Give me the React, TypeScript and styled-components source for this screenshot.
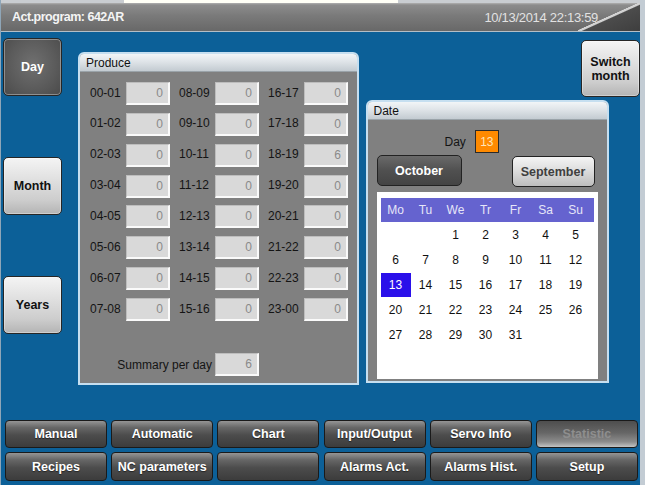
import React from 'react'
import styled, { createGlobalStyle, css } from 'styled-components';

const GlobalStyle = createGlobalStyle`
  html, body {
    margin: 0;
    padding: 0;
    background: #0c6098;
  }
  body {
    font-family: "Liberation Sans", Arial, sans-serif;
  }
`;

const Screen = styled.div`
  width: 645px;
  height: 485px;
  box-sizing: border-box;
  display: flex;
  flex-direction: column;
  background: #0c6098;
  border-left: 1px solid #8fa6b8;
  border-right: 5px solid #c3ccd4;
  overflow: hidden;
`;

const TopStrip = styled.div`
  height: 3px;
  background: #c9cdd1;
  display: flex;
`;

const TopStripMark = styled.div`
  margin-left: 123px;
  width: 274px;
  height: 3px;
  background: #fffff6;
`;

const Header = styled.div`
  height: 29px;
  box-sizing: border-box;
  display: flex;
  align-items: center;
  background: linear-gradient(#b0b0b0 0px, #8c8c8c 2px, #7a7a7a 45%, #686868 100%);
  border-bottom: 1px solid #b4bec6;
`;

const ProgramName = styled.div`
  padding-left: 11px;
  color: #f4f4f4;
  font-weight: bold;
  font-size: 12.5px;
  letter-spacing: -0.5px;
`;

const Clock = styled.div`
  margin-left: auto;
  color: #e2e2e2;
  font-size: 13px;
  letter-spacing: -0.3px;
`;

const HeaderSlant = styled.div`
  width: 62px;
  height: 100%;
  margin-left: -20px;
  background: linear-gradient(to bottom right, transparent 48%, #d6d6d6 49%, #cfcfcf 52%, #4c4c4c 54%, #3e3e3e 100%);
`;

const Main = styled.div`
  flex: 1;
  display: flex;
  align-items: flex-start;
  padding-left: 2px;
`;

const SideColumn = styled.div`
  width: 59px;
  padding-top: 6px;
  display: flex;
  flex-direction: column;
  gap: 61px;
  margin-right: 16px;
`;

const bevelLight = css`
  background: linear-gradient(#f4f4f4 0%, #e2e2e2 35%, #cdcdcd 75%, #b4b4b4 100%);
  color: #111;
`;

const bevelDark = css`
  background: radial-gradient(ellipse at 50% 45%, #707070 0%, #5a5a5a 60%, #4a4a4a 100%);
  color: #fff;
`;

const SideButton = styled.button<{ $active?: boolean }>`
  width: 59px;
  height: 58px;
  border: 1.5px solid #262626;
  border-radius: 5px;
  font-family: "Liberation Sans", Arial, sans-serif;
  font-weight: bold;
  font-size: 12.5px;
  line-height: 14px;
  padding: 0;
  cursor: pointer;
  box-shadow: inset 0 0 0 1px rgba(255, 255, 255, 0.35);
  ${p => (p.$active ? bevelDark : bevelLight)}
`;

const Panel = styled.div<{ $w: number; $h: number }>`
  width: ${p => p.$w}px;
  height: ${p => p.$h}px;
  box-sizing: border-box;
  border: 2px solid #c6dff0;
  border-radius: 6px 6px 0 0;
  background: #808080;
  display: flex;
  flex-direction: column;
`;

const PanelTitle = styled.div`
  height: 17px;
  padding-left: 6px;
  display: flex;
  align-items: center;
  font-size: 12px;
  color: #111;
  border-radius: 4px 4px 0 0;
  background: linear-gradient(#f2f5f7 0%, #dfe4e8 45%, #c3cbd1 100%);
  border-bottom: 1px solid #9aa3a9;
`;

const ProducePanel = styled(Panel)`
  margin-top: 20px;
`;

const HourGrid = styled.div`
  display: grid;
  grid-template-columns: repeat(3, 80px);
  grid-template-rows: repeat(8, 23px);
  grid-auto-flow: column;
  column-gap: 9px;
  row-gap: 7.86px;
  padding: 10px 0 0 10px;
`;

const Cell = styled.div`
  display: flex;
  align-items: center;
`;

const HourLabel = styled.span`
  width: 36px;
  font-size: 12px;
  color: #141414;
  margin-top: -2px;
`;

const ValueBox = styled.div`
  width: 44px;
  height: 23px;
  box-sizing: border-box;
  background: #d9d9d9;
  border-top: 1px solid #bdbdbd;
  border-left: 1px solid #bdbdbd;
  border-right: 2px solid #fafafa;
  border-bottom: 2px solid #fafafa;
  display: flex;
  align-items: center;
  justify-content: flex-end;
  padding-right: 5px;
  font-size: 12px;
  color: #8a8a8a;
`;

const SummaryRow = styled.div`
  display: flex;
  align-items: center;
  margin: 32px 0 0 10px;
`;

const SummaryLabel = styled.span`
  width: 122px;
  padding-right: 3px;
  text-align: right;
  font-size: 12px;
  color: #141414;
`;

const RightColumn = styled.div`
  margin-left: 7px;
  width: 275px;
  padding-top: 8px;
  display: flex;
  flex-direction: column;
  align-items: flex-start;
`;

const SwitchButton = styled(SideButton)`
  align-self: flex-end;
  height: 57px;
`;

const DatePanel = styled(Panel)`
  margin-top: 3px;
`;

const DayRow = styled.div`
  display: flex;
  align-items: center;
  gap: 9px;
  padding: 10px 0 0 77px;
  font-size: 12px;
  color: #141414;
`;

const DayBox = styled.div`
  width: 24px;
  height: 23px;
  box-sizing: border-box;
  border: 1px solid #2a2a2a;
  background: #ff8a00;
  color: #ffe4b8;
  font-size: 12px;
  display: flex;
  align-items: center;
  justify-content: center;
`;

const MonthRow = styled.div`
  display: flex;
  justify-content: space-between;
  align-items: flex-start;
  padding: 2px 12px 0 9px;
`;

const MonthButton = styled.button<{ $active?: boolean }>`
  width: 85px;
  height: 31px;
  padding: 0;
  border: 1.5px solid #222;
  border-radius: 5px;
  font-family: "Liberation Sans", Arial, sans-serif;
  font-weight: bold;
  font-size: 12.5px;
  cursor: pointer;
  ${p =>
    p.$active
      ? css`
          background: linear-gradient(#6a6a6a 0%, #505050 50%, #444 100%);
          color: #fff;
        `
      : css`
          margin-top: 1px;
          width: 83px;
          background: linear-gradient(#f4f4f4 0%, #dedede 45%, #bdbdbd 100%);
          color: #404040;
        `}
`;

const CalendarBox = styled.div`
  margin: 5px 0 0 9px;
  width: 221px;
  height: 187px;
  box-sizing: border-box;
  background: #fff;
  padding: 6px 4px;
`;

const WeekHeader = styled.div`
  display: grid;
  grid-template-columns: repeat(7, 30px);
  height: 24px;
  align-items: center;
  background: #6563cf;
`;

const WeekDay = styled.span`
  text-align: center;
  font-size: 12px;
  color: #e6e6f8;
`;

const DaysGrid = styled.div`
  display: grid;
  grid-template-columns: repeat(7, 30px);
  grid-auto-rows: 25px;
`;

const DayCell = styled.span<{ $selected?: boolean }>`
  display: flex;
  align-items: center;
  justify-content: center;
  font-size: 12px;
  color: ${p => (p.$selected ? '#fff' : '#111')};
  background: ${p => (p.$selected ? '#2a10ea' : 'transparent')};
  height: 24px;
  align-self: center;
`;

const Nav = styled.div`
  display: grid;
  grid-template-columns: repeat(6, 102px);
  grid-template-rows: 28px 29px;
  column-gap: 4.2px;
  row-gap: 4px;
  padding: 4px 0 4px 4px;
`;

const NavButton = styled.button<{ $disabled?: boolean }>`
  border: 1.5px solid #1a1a1a;
  border-radius: 4px;
  padding: 0;
  font-family: "Liberation Sans", Arial, sans-serif;
  font-weight: bold;
  font-size: 12.5px;
  cursor: pointer;
  ${p =>
    p.$disabled
      ? css`
          background: linear-gradient(#4e4e4e 0%, #666 45%, #8c8c8c 80%, #c4c4c4 100%);
          color: #8e8e8e;
        `
      : css`
          background: linear-gradient(#959595 0%, #676767 25%, #4c4c4c 55%, #3c3c3c 100%);
          color: #fff;
          text-shadow: 0 1px 1px #222;
        `}
`;

const HOURS = Array.from({ length: 24 }, (_, i) => {
  const pad = (n: number) => String(n % 24).padStart(2, '0');
  return { label: `${pad(i)}-${pad(i + 1)}`, value: i === 18 ? 6 : 0 };
});

const WEEK = ['Mo', 'Tu', 'We', 'Tr', 'Fr', 'Sa', 'Su'];

// October 2014 starts on a Wednesday
const MONTH_DAYS: (number | null)[] = [null, null, ...Array.from({ length: 31 }, (_, i) => i + 1)];

const NAV = [
  'Manual', 'Automatic', 'Chart', 'Input/Output', 'Servo Info', 'Statistic',
  'Recipes', 'NC parameters', '', 'Alarms Act.', 'Alarms Hist.', 'Setup',
];

function App() {
  return (
    <>
      <GlobalStyle />
      <Screen>
        <TopStrip>
          <TopStripMark />
        </TopStrip>
        <Header>
          <ProgramName>Act.program: 642AR</ProgramName>
          <Clock>10/13/2014 22:13:59</Clock>
          <HeaderSlant />
        </Header>

        <Main>
          <SideColumn>
            <SideButton $active>Day</SideButton>
            <SideButton>Month</SideButton>
            <SideButton>Years</SideButton>
          </SideColumn>

          <ProducePanel $w={281} $h={333}>
            <PanelTitle>Produce</PanelTitle>
            <HourGrid>
              {HOURS.map(h => (
                <Cell key={h.label}>
                  <HourLabel>{h.label}</HourLabel>
                  <ValueBox>{h.value}</ValueBox>
                </Cell>
              ))}
            </HourGrid>
            <SummaryRow>
              <SummaryLabel>Summary per day</SummaryLabel>
              <ValueBox>6</ValueBox>
            </SummaryRow>
          </ProducePanel>

          <RightColumn>
            <SwitchButton>Switch<br />month</SwitchButton>
            <DatePanel $w={243} $h={283}>
              <PanelTitle>Date</PanelTitle>
              <DayRow>
                Day
                <DayBox>13</DayBox>
              </DayRow>
              <MonthRow>
                <MonthButton $active>October</MonthButton>
                <MonthButton>September</MonthButton>
              </MonthRow>
              <CalendarBox>
                <WeekHeader>
                  {WEEK.map(d => <WeekDay key={d}>{d}</WeekDay>)}
                </WeekHeader>
                <DaysGrid>
                  {MONTH_DAYS.map((d, i) => (
                    <DayCell key={i} $selected={d === 13}>{d ?? ''}</DayCell>
                  ))}
                </DaysGrid>
              </CalendarBox>
            </DatePanel>
          </RightColumn>
        </Main>

        <Nav>
          {NAV.map((n, i) => (
            <NavButton key={i} $disabled={n === 'Statistic'}>{n}</NavButton>
          ))}
        </Nav>
      </Screen>
    </>
  )
}

export default App
